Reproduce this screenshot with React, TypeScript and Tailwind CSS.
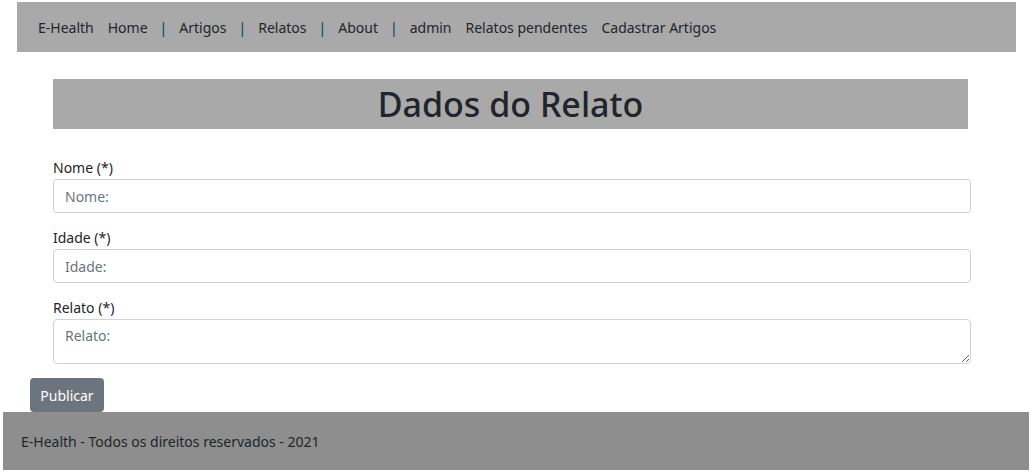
import React from "react";

const font = { fontFamily: '"Noto Sans", "Open Sans", sans-serif' };

function Field({ label, placeholder, area }: { label: string; placeholder: string; area?: boolean }) {
  return (
    <div className="flex flex-col">
      <label className="text-[14px] leading-[20px] text-[#212529] mb-[1px]">{label}</label>
      {area ? (
        <textarea
          placeholder={placeholder}
          className="h-[45px] w-[918px] rounded-[4px] border border-[#ced4da] bg-white px-[11px] py-[6px] text-[14px] leading-[20px] text-[#212529] placeholder:text-[#6c757d] outline-none"
        />
      ) : (
        <input
          placeholder={placeholder}
          className="h-[34px] w-[918px] rounded-[4px] border border-[#ced4da] bg-white px-[11px] text-[14px] text-[#212529] placeholder:text-[#6c757d] outline-none"
        />
      )}
    </div>
  );
}

export default function App() {
  const Pipe = () => <span className="text-[#0a3a5e] -mx-[2px]">|</span>;
  return (
    <div style={font} className="w-[1032px] h-[474px] bg-white flex flex-col">
      <nav className="mt-[2px] ml-[17px] w-[999px] h-[50px] bg-[#a9a9a9] flex items-center pl-[21px] gap-[14px] text-[14px] text-[#212529]">
        <span>E-Health</span>
        <span>Home</span>
        <Pipe />
        <span>Artigos</span>
        <Pipe />
        <span>Relatos</span>
        <Pipe />
        <span>About</span>
        <Pipe />
        <span>admin</span>
        <span>Relatos pendentes</span>
        <span>Cadastrar Artigos</span>
      </nav>
      <div className="ml-[53px] mt-[27px] w-[915px] h-[50px] bg-[#a9a9a9] flex items-center justify-center">
        <h1 className="text-[34px] font-medium text-[#212529] leading-none">Dados do Relato</h1>
      </div>
      <div className="ml-[53px] mt-[29px] flex flex-col gap-[15px]">
        <Field label="Nome (*)" placeholder="Nome:" />
        <Field label="Idade (*)" placeholder="Idade:" />
        <Field label="Relato (*)" placeholder="Relato:" area />
      </div>
      <div className="ml-[30px] mt-[14px]">
        <button className="h-[34px] w-[74px] rounded-[4px] bg-[#6c757d] text-white text-[14px]">Publicar</button>
      </div>
      <footer className="ml-[3px] w-[1026px] h-[58px] bg-[#8e8e8e] flex items-center pl-[18px] text-[14px] text-[#212529]">
        E-Health - Todos os direitos reservados - 2021
      </footer>
    </div>
  );
}
